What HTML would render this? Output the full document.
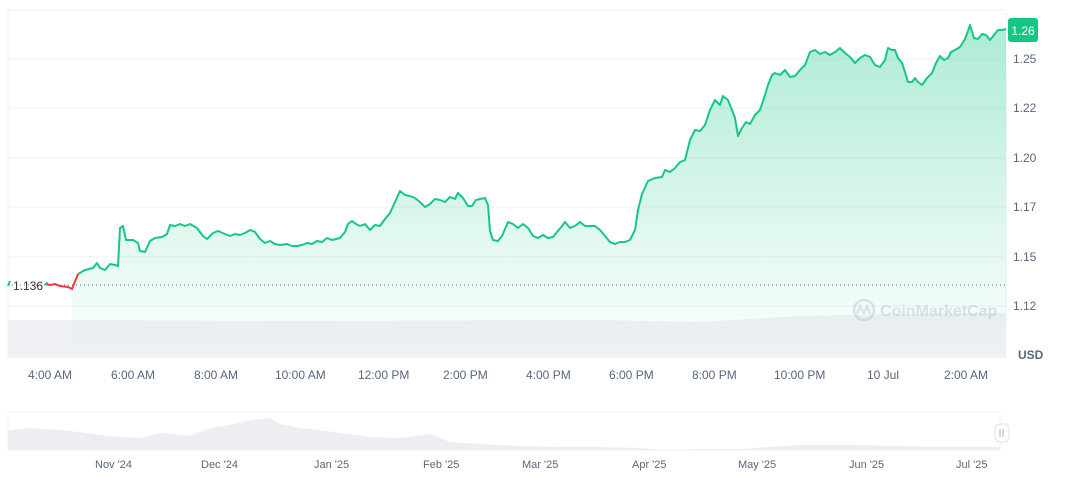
<!DOCTYPE html><html><head><style>
body{margin:0;background:#fff;font-family:"Liberation Sans",sans-serif;}
.l{position:absolute;font-size:12px;color:#58667e}
</style></head><body>
<div style="position:relative;width:1072px;height:477px;overflow:hidden">
<svg width="1072" height="477" style="position:absolute;left:0;top:0">
<defs><linearGradient id="g" x1="0" y1="0" x2="0" y2="1"><stop offset="0" stop-color="#16c784" stop-opacity=".35"/><stop offset="1" stop-color="#16c784" stop-opacity="0"/></linearGradient></defs>
<g stroke="#eff2f5" stroke-width="1">
<line x1="8" y1="10" x2="1006" y2="10"/>
<line x1="8" y1="59" x2="1006" y2="59"/><line x1="8" y1="108" x2="1006" y2="108"/><line x1="8" y1="158" x2="1006" y2="158"/><line x1="8" y1="207" x2="1006" y2="207"/><line x1="8" y1="257" x2="1006" y2="257"/><line x1="8" y1="306" x2="1006" y2="306"/>
<line x1="8" y1="10" x2="8" y2="358"/><line x1="1006" y1="10" x2="1006" y2="358"/>
</g>
<path d="M8,320 L300,321 L600,320 L700,322 L800,316 L900,314 L1006,313 L1006,358 L8,358Z" fill="#f0f1f4"/>
<path d="M78,274 L85,270 L93,268 L97,263 L100,268 L105,270 L110,264 L115,265 L118,266 L120,228 L123,226 L126,240 L133,240 L138,243 L140,251 L145,252 L150,241 L155,238 L162,237 L167,234 L170,225 L175,226 L180,224 L185,226 L190,224 L197,228 L203,236 L207,239 L213,233 L218,231 L225,234 L230,236 L235,234 L240,235 L245,233 L250,230 L255,232 L260,239 L265,243 L270,241 L275,244 L280,245 L287,244 L292,246 L297,246 L302,245 L307,243 L312,244 L317,241 L322,242 L327,238 L332,240 L340,238 L345,232 L348,224 L352,221 L356,224 L360,226 L365,224 L370,230 L375,225 L380,226 L385,219 L390,213 L395,202 L400,191 L405,195 L410,196 L415,198 L420,202 L425,207 L430,204 L435,199 L440,200 L445,202 L450,197 L455,199 L458,193 L463,198 L468,206 L472,206 L476,200 L480,199 L485,198 L488,205 L490,231 L493,240 L498,241 L502,236 L508,222 L513,224 L518,228 L523,224 L528,228 L533,236 L538,238 L543,235 L548,238 L553,237 L557,232 L562,226 L565,222 L570,228 L575,226 L580,222 L585,226 L590,226 L595,226 L600,230 L605,236 L610,242 L615,244 L620,242 L625,242 L630,240 L635,230 L638,210 L642,194 L648,181 L655,178 L662,177 L665,170 L670,172 L675,168 L680,162 L685,160 L690,140 L695,130 L700,131 L705,125 L710,110 L715,100 L720,105 L723,96 L728,100 L732,110 L735,118 L738,136 L742,128 L746,122 L750,124 L755,115 L760,110 L765,95 L768,85 L772,75 L775,73 L780,75 L785,70 L790,77 L795,76 L800,70 L805,65 L810,52 L815,50 L820,54 L825,52 L830,55 L835,52 L840,48 L845,53 L850,57 L855,63 L860,58 L865,55 L870,57 L875,65 L880,67 L885,60 L888,48 L892,50 L895,50 L898,58 L902,63 L905,72 L908,82 L912,82 L915,78 L918,82 L922,85 L927,78 L932,73 L936,63 L940,56 L944,60 L948,58 L951,52 L955,50 L960,47 L965,39 L968,31 L970,25 L974,38 L978,39 L982,34 L986,35 L990,40 L994,35 L998,30 L1002,30 L1006,29 L1006,358 L72,358 L72,289Z" fill="url(#g)"/>
<line x1="8" y1="285" x2="1006" y2="285" stroke="#58667e" stroke-width="1" stroke-dasharray="1,3"/>
<path d="M78,274 L85,270 L93,268 L97,263 L100,268 L105,270 L110,264 L115,265 L118,266 L120,228 L123,226 L126,240 L133,240 L138,243 L140,251 L145,252 L150,241 L155,238 L162,237 L167,234 L170,225 L175,226 L180,224 L185,226 L190,224 L197,228 L203,236 L207,239 L213,233 L218,231 L225,234 L230,236 L235,234 L240,235 L245,233 L250,230 L255,232 L260,239 L265,243 L270,241 L275,244 L280,245 L287,244 L292,246 L297,246 L302,245 L307,243 L312,244 L317,241 L322,242 L327,238 L332,240 L340,238 L345,232 L348,224 L352,221 L356,224 L360,226 L365,224 L370,230 L375,225 L380,226 L385,219 L390,213 L395,202 L400,191 L405,195 L410,196 L415,198 L420,202 L425,207 L430,204 L435,199 L440,200 L445,202 L450,197 L455,199 L458,193 L463,198 L468,206 L472,206 L476,200 L480,199 L485,198 L488,205 L490,231 L493,240 L498,241 L502,236 L508,222 L513,224 L518,228 L523,224 L528,228 L533,236 L538,238 L543,235 L548,238 L553,237 L557,232 L562,226 L565,222 L570,228 L575,226 L580,222 L585,226 L590,226 L595,226 L600,230 L605,236 L610,242 L615,244 L620,242 L625,242 L630,240 L635,230 L638,210 L642,194 L648,181 L655,178 L662,177 L665,170 L670,172 L675,168 L680,162 L685,160 L690,140 L695,130 L700,131 L705,125 L710,110 L715,100 L720,105 L723,96 L728,100 L732,110 L735,118 L738,136 L742,128 L746,122 L750,124 L755,115 L760,110 L765,95 L768,85 L772,75 L775,73 L780,75 L785,70 L790,77 L795,76 L800,70 L805,65 L810,52 L815,50 L820,54 L825,52 L830,55 L835,52 L840,48 L845,53 L850,57 L855,63 L860,58 L865,55 L870,57 L875,65 L880,67 L885,60 L888,48 L892,50 L895,50 L898,58 L902,63 L905,72 L908,82 L912,82 L915,78 L918,82 L922,85 L927,78 L932,73 L936,63 L940,56 L944,60 L948,58 L951,52 L955,50 L960,47 L965,39 L968,31 L970,25 L974,38 L978,39 L982,34 L986,35 L990,40 L994,35 L998,30 L1002,30 L1006,29" fill="none" stroke="#16c784" stroke-width="2" stroke-linejoin="round"/>
<path d="M45,284 L50,285 L55,284 L60,286 L68,287 L72,289 L78,274" fill="none" stroke="#ea3943" stroke-width="2"/>
<path d="M45,284 L48,283" stroke="#16c784" stroke-width="2"/>
<path d="M8,286 L10,281" stroke="#16c784" stroke-width="2"/>
<rect x="1008" y="18" width="30" height="24" rx="3" fill="#16c784"/>
<text x="1023" y="35" font-size="12" fill="#fff" text-anchor="middle" font-family="Liberation Sans">1.26</text>
<g opacity=".35"><circle cx="864" cy="310" r="10" fill="none" stroke="#a6b0c3" stroke-width="2.5"/><path d="M857,314 L860,306 L864,313 L867,306 L870,314" fill="none" stroke="#a6b0c3" stroke-width="2"/>
<text x="880" y="316" font-size="16" font-weight="bold" fill="#a6b0c3" font-family="Liberation Sans">CoinMarketCap</text></g>
<rect x="8" y="412" width="992" height="38" fill="none" stroke="#eff2f5"/>
<path d="M8,430 L30,428 L60,430 L80,432 L110,436 L140,438 L160,433 L190,436 L210,428 L230,425 L250,420 L270,418 L280,424 L300,428 L320,430 L340,433 L370,437 L400,438 L430,434 L440,438 L450,442 L480,444 L520,446 L560,447 L600,447 L640,448 L660,450 L700,449 L740,449 L770,447 L800,445 L850,445 L900,446 L940,447 L1000,447 L1000,450 L8,450Z" fill="#eceef2"/>
<rect x="995" y="424" width="14" height="18" rx="5" fill="#fff" stroke="#e0e3e8"/>
<line x1="1000" y1="429" x2="1000" y2="437" stroke="#a6b0c3"/><line x1="1003" y1="429" x2="1003" y2="437" stroke="#a6b0c3"/>
</svg>
<div class="l" style="left:13px;top:279px;color:#333">1.136</div>
<div class="l" style="left:1013px;top:52px">1.25</div><div class="l" style="left:1013px;top:101px">1.22</div><div class="l" style="left:1013px;top:151px">1.20</div><div class="l" style="left:1013px;top:200px">1.17</div><div class="l" style="left:1013px;top:250px">1.15</div><div class="l" style="left:1013px;top:299px">1.12</div>
<div class="l" style="left:1018px;top:348px;font-weight:bold">USD</div>
<div class="l" style="left:28px;top:368px">4:00 AM</div><div class="l" style="left:111px;top:368px">6:00 AM</div><div class="l" style="left:194px;top:368px">8:00 AM</div><div class="l" style="left:275px;top:368px">10:00 AM</div><div class="l" style="left:358px;top:368px">12:00 PM</div><div class="l" style="left:443px;top:368px">2:00 PM</div><div class="l" style="left:526px;top:368px">4:00 PM</div><div class="l" style="left:609px;top:368px">6:00 PM</div><div class="l" style="left:692px;top:368px">8:00 PM</div><div class="l" style="left:774px;top:368px">10:00 PM</div><div class="l" style="left:867px;top:368px">10 Jul</div><div class="l" style="left:944px;top:368px">2:00 AM</div>
<div class="l" style="left:95px;top:459px;font-size:11px">Nov '24</div><div class="l" style="left:201px;top:459px;font-size:11px">Dec '24</div><div class="l" style="left:314px;top:459px;font-size:11px">Jan '25</div><div class="l" style="left:423px;top:459px;font-size:11px">Feb '25</div><div class="l" style="left:522px;top:459px;font-size:11px">Mar '25</div><div class="l" style="left:632px;top:459px;font-size:11px">Apr '25</div><div class="l" style="left:738px;top:459px;font-size:11px">May '25</div><div class="l" style="left:849px;top:459px;font-size:11px">Jun '25</div><div class="l" style="left:956px;top:459px;font-size:11px">Jul '25</div>
</div></body></html>
